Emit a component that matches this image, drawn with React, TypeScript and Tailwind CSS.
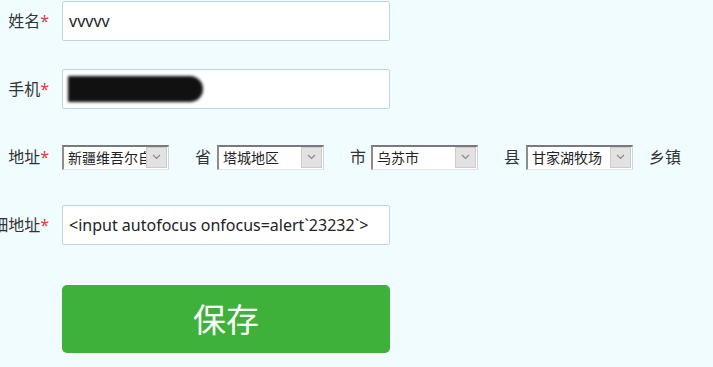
import React from "react";

const font = { fontFamily: '"Microsoft YaHei", "Noto Sans", "Noto Sans CJK SC", sans-serif' };

const Label = ({ text }: { text: string }) => (
  <div className="w-[49px] shrink-0 flex justify-end whitespace-nowrap text-[16px] text-[#333]">
    <span>{text}</span>
    <span className="text-[#e0413a]">*</span>
  </div>
);

const FakeSelect = ({ value }: { value: string }) => (
  <div className="w-[107px] h-[25px] shrink-0 flex bg-white border-t-2 border-l-2 border-t-[#7a7a7a] border-l-[#8c8c8c] border-r border-b border-r-[#d4d4d4] border-b-[#e6e6e6]">
    <div className="flex-1 overflow-hidden whitespace-nowrap pl-[4px] text-[14px] leading-[22px] text-[#222]">
      {value}
    </div>
    <div className="w-[21px] h-[21px] mr-px shrink-0 bg-[#e2e2e2] border border-[#cccccc] flex items-center justify-center">
      <svg width="9" height="6" viewBox="0 0 9 6">
        <path d="M1 1 L4.5 4.5 L8 1" fill="none" stroke="#8a8a8a" strokeWidth="1.2" />
      </svg>
    </div>
  </div>
);

export default function App() {
  return (
    <div className="min-h-screen w-full bg-[#f0fcff] pt-px overflow-hidden" style={font}>
      <div className="flex items-center h-[40px]">
        <Label text="姓名" />
        <input
          className="ml-[13px] w-[328px] h-[40px] bg-white border border-[#bcd7e2] rounded-[2px] px-[6px] text-[16px] text-[#222] outline-none"
          defaultValue="vvvvv"
        />
      </div>

      <div className="flex items-center h-[40px] mt-[28px]">
        <Label text="手机" />
        <div className="ml-[13px] w-[328px] h-[40px] bg-white border border-[#bcd7e2] rounded-[2px] flex items-center pl-[5px]">
          <div className="w-[135px] h-[26px] bg-[#111] rounded-r-full blur-[1.5px]" />
        </div>
      </div>

      <div className="flex items-center h-[40px] mt-[28px] text-[16px] text-[#333]">
        <Label text="地址" />
        <div className="ml-[13px]">
          <FakeSelect value="新疆维吾尔自治区" />
        </div>
        <span className="ml-[26px] mr-[6px]">省</span>
        <FakeSelect value="塔城地区" />
        <span className="ml-[26px] mr-[5px]">市</span>
        <FakeSelect value="乌苏市" />
        <span className="ml-[26px] mr-[6px]">县</span>
        <FakeSelect value="甘家湖牧场" />
        <span className="ml-[16px]">乡镇</span>
      </div>

      <div className="flex items-center h-[40px] mt-[28px]">
        <Label text="详细地址" />
        <input
          className="ml-[13px] w-[328px] h-[40px] bg-white border border-[#bcd7e2] rounded-[2px] px-[6px] text-[16px] text-[#222] outline-none"
          defaultValue="<input autofocus onfocus=alert`23232`>"
        />
      </div>

      <div className="flex mt-[40px]">
        <div className="w-[62px] shrink-0" />
        <button className="w-[328px] h-[68px] bg-[#3eb13a] rounded-[5px] text-white text-[33px] leading-none">
          保存
        </button>
      </div>
    </div>
  );
}
